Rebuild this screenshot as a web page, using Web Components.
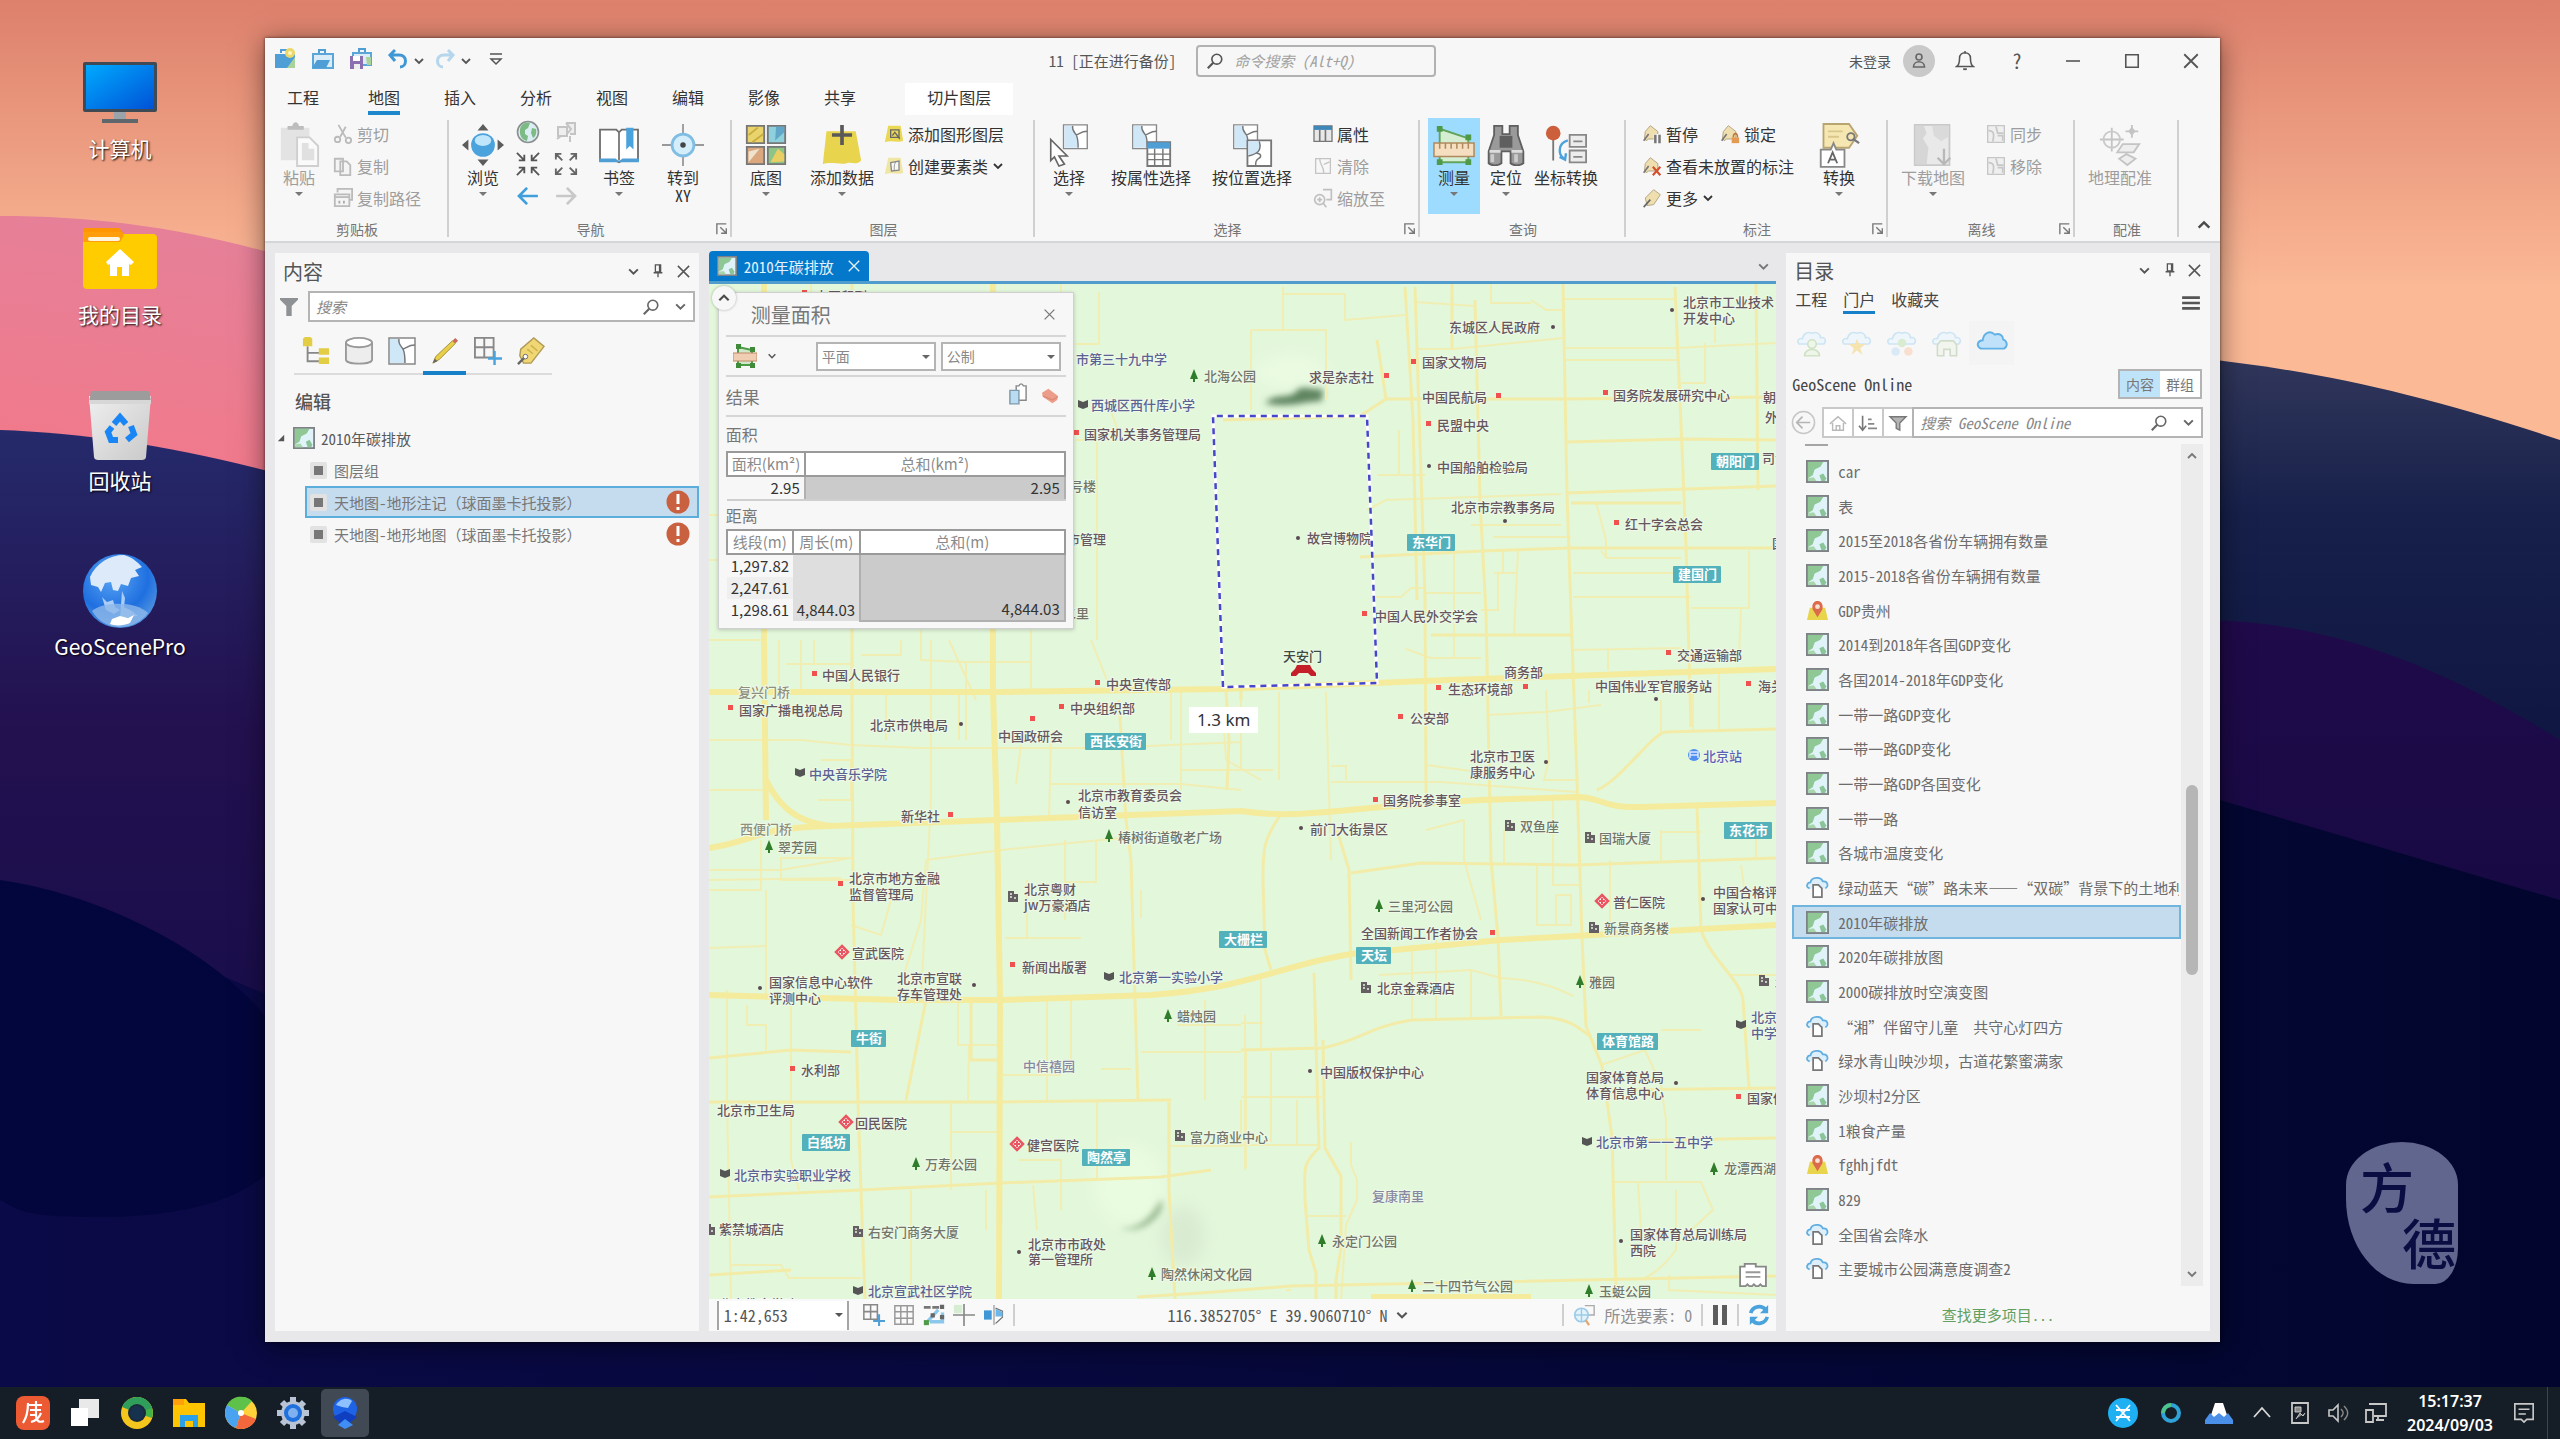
<!DOCTYPE html>
<html lang="zh-CN">
<head>
<meta charset="utf-8">
<title>GeoScenePro</title>
<style>
  html, body {
    height: 100%;
    margin: 0;
  }

  body {
    font-family: "Noto Sans Mono CJK SC", "Noto Sans CJK SC", "Noto Sans", sans-serif;
    font-size: 15px;
    color: #4a4a4a;
    overflow: hidden;
  }
</style>
</head>
<body>
<desktop-shell></desktop-shell>

<script>
// ---------- icons ----------
// name: [viewBox width, viewBox height, markup]

const MAP_SHEET = '<rect x="1" y="1" width="22" height="22" fill="#dff3f8" stroke="#7d8285" stroke-width="2"/><path d="M2 2h16l-3 5-6 3-2 6-5 3z" fill="#8fc795"/><path d="M14 16l4-2 3 5-1 3h-4z" fill="#8cc49a"/><path d="M2 19l6-1 3 4H2z" fill="#a8d6ac"/>';
const TAG = '<path d="M3 17L4 9l6-7 9 7v9H8l-3 2z" fill="#f0dfae" stroke="#a8997a"/><path d="M2 20l6-8" stroke="#777" stroke-width="2"/>';
const CLOUD = '<path d="M3 15c-3-3 0-6 3-5 1-5 5-7 9-5 3-2 8 0 8 4 4-1 6 3 3 6z" fill="#eef6fc" stroke="#cde5f3" stroke-width="1.5"/>';
const SHEET = '<path d="M1 1h26v26H1z" fill="#fff" stroke="#888" stroke-width="1.5"/><path d="M2 2h9c-1 5 2 7 4 10 2 4 2 9 2 14H2z" fill="#cfe7f7"/><path d="M11 2c-1 5 2 7 4 10 2 4 2 9 2 14M15 12c4-1 5-4 12-4" fill="none" stroke="#777" stroke-width="1.5"/>';

const ICONS = {
  chevron: [12, 12, '<path d="M2 4l4 4 4-4" fill="none" stroke="currentColor" stroke-width="1.8"/>'],
  chevronUp: [12, 12, '<path d="M2 8l4-4 4 4" fill="none" stroke="currentColor" stroke-width="1.8"/>'],
  caret: [12, 12, '<path d="M2 4h8l-4 4z" fill="currentColor"/>'],
  close: [16, 16, '<path d="M2 2l12 12M14 2L2 14" stroke="currentColor" stroke-width="1.6"/>'],
  pin: [16, 16, '<path d="M5 1h6v8H5zM3 10h10M8 10v5" fill="none" stroke="currentColor" stroke-width="1.5"/><path d="M9 1h2v8H9z" fill="currentColor"/>'],
  search: [20, 20, '<circle cx="12" cy="8" r="5.5" fill="none" stroke="currentColor" stroke-width="1.8"/><path d="M8 12l-6 6" stroke="currentColor" stroke-width="2.4"/>'],
  filter: [20, 22, '<path d="M0 1h20v2l-7 7v11H7V10L0 3z" fill="#8f9294"/>'],
  filterLine: [22, 20, '<path d="M2 3h18l-7 7v8l-4-2v-6z" fill="#b4b4b4" stroke="#777" stroke-width="1.5"/>'],
  minimize: [18, 18, '<path d="M2 9h14" stroke="currentColor" stroke-width="1.6"/>'],
  maximize: [18, 18, '<path d="M2 2h14v14H2z" fill="none" stroke="currentColor" stroke-width="1.8"/>'],
  bell: [22, 24, '<path d="M2 18c3-2 3-5 3-9 0-8 12-8 12 0 0 4 0 7 3 9zM11 1v3" fill="none" stroke="currentColor" stroke-width="1.7"/><path d="M9 20h4v2H9z" fill="currentColor"/>'],
  avatar: [32, 32, '<circle cx="16" cy="16" r="16" fill="#c9c9c9"/><circle cx="16" cy="12" r="3" fill="none" stroke="#666" stroke-width="1.6"/><path d="M10.500 22c0-7 11-7 11 0z" fill="none" stroke="#666" stroke-width="1.6"/>'],
  menu: [20, 18, '<path d="M0 3h20M0 9h20M0 15h20" stroke="#555" stroke-width="3"/>'],
  launcher: [14, 14, '<path d="M1 13V1h11M5 5l7 7M12 6v6H6" fill="none" stroke="#777" stroke-width="1.6"/>'],

  projectNew: [24, 24, '<path d="M2 7h20v14H2z" fill="#4f9ed6"/><path d="M8 6V3h6v3" fill="none" stroke="#4f9ed6" stroke-width="2"/><path d="M22 10v11h-8z" fill="#a9d39a"/><circle cx="17" cy="6" r="5" fill="#ecd868"/><circle cx="17" cy="6" r="2" fill="#fff6c0"/>'],
  projectOpen: [24, 24, '<path d="M2 7h20v14H2z" fill="#d9ecf7" stroke="#5aa6d8" stroke-width="2"/><path d="M8 6V3h6v3" fill="none" stroke="#4f9ed6" stroke-width="2"/><path d="M1 21l5-8h13l-4 8z" fill="#4f9ed6"/>'],
  projectSave: [24, 24, '<path d="M4 6h18v12H4z" fill="#d9ecf7" stroke="#5aa6d8" stroke-width="2"/><path d="M10 5V2h6v3" fill="none" stroke="#4f9ed6" stroke-width="2"/><path d="M1 9h13v13H1z" fill="#8c6fb0"/><path d="M4 9h7v5H4z" fill="#fff"/><path d="M5 17h6v5H5z" fill="#eee"/><path d="M17 10h5v8h-4z" fill="#a9d39a"/>'],
  undo: [22, 22, '<path d="M8 2L3 7l5 6M3 7h9c9 0 8 12 1 12" fill="none" stroke="#3f97d6" stroke-width="3"/>'],
  redo: [22, 22, '<path d="M14 2l5 5-5 6M19 7h-9c-9 0-8 12-1 12" fill="none" stroke="#b5d6ec" stroke-width="3"/>'],
  qatMore: [14, 16, '<path d="M1 3h12M2 8h10l-5 5z" fill="none" stroke="#555" stroke-width="1.5"/>'],

  paste: [44, 48, '<path d="M3 6h30v34H3z" fill="#e3e3e3"/><path d="M10 8V4h5c1-5 6-5 7 0h5v4z" fill="#bdbdbd"/><path d="M20 16h13l9 9v21H20z" fill="#fafafa" stroke="#cfcfcf" stroke-width="2"/><path d="M25 22h7v6h6v12H25z" fill="#e0e0e0"/>'],
  cut: [22, 22, '<path d="M6 1l8 14M14 3L8 14" stroke="#bbb" stroke-width="2"/><circle cx="5" cy="17" r="3" fill="none" stroke="#bbb" stroke-width="2"/><circle cx="17" cy="18" r="3" fill="none" stroke="#bbb" stroke-width="2"/>'],
  copy: [22, 22, '<path d="M2 3h9v14H2zM8 6h7l4 4v11H8z" fill="#f4f4f4" stroke="#bbb" stroke-width="2"/>'],
  copyPath: [22, 22, '<path d="M5 5V1h16v12h-3M2 7h16v13H2z" fill="#f4f4f4" stroke="#bbb" stroke-width="2"/><path d="M2 10h16" stroke="#bbb" stroke-width="2"/><path d="M7 14v3M12 14v3" stroke="#aaa" stroke-width="2"/>'],
  explore: [46, 46, '<path d="M23 0l6 7H17zM23 46l6-7H17zM0 23l7-6v12zM46 23l-7-6v12z" fill="#5c5c5c"/><circle cx="23" cy="23" r="13" fill="#4aa3dd"/><ellipse cx="23" cy="18" rx="9" ry="6" fill="#bfe6fa"/>'],
  globe: [24, 24, '<circle cx="12" cy="12" r="10.500" fill="#dceef3" stroke="#8a8f8f" stroke-width="1.6"/><path d="M5 6c3-4 7-4 9-3l-2 5-3 2v4l3 2-1 5C5 20 2 13 5 6zM16 8l4 1c1 5-1 8-3 9l-2-5z" fill="#7dbb85"/>'],
  zoomSel: [24, 24, '<path d="M4 7h9v9H4zM12 3h9v11h-5" fill="#eee" stroke="#c4c4c4" stroke-width="2"/><path d="M12 3l5 6-4 5M16 16v6M3 19l4-3" fill="none" stroke="#c4c4c4" stroke-width="2"/>'],
  zoomIn: [26, 26, '<path d="M1 1l7 7M25 1l-7 7M1 25l7-7M25 25l-7-7M3 9h6V3M23 9h-6V3M3 17h6v6M23 17h-6v6" fill="none" stroke="#555" stroke-width="2"/>'],
  zoomOut: [26, 26, '<path d="M3 3l6 6M23 3l-6 6M3 23l6-6M23 23l-6-6M2 8V2h6M24 8V2h-6M2 18v6h6M24 18v6h-6" fill="none" stroke="#666" stroke-width="2"/>'],
  back: [24, 20, '<path d="M11 1L2 10l9 9M2 10h21" fill="none" stroke="#3f9fdc" stroke-width="3"/>'],
  forward: [24, 20, '<path d="M13 1l9 9-9 9M22 10H1" fill="none" stroke="#c8c8c8" stroke-width="3"/>'],
  bookmark: [46, 42, '<path d="M2 4h18l3 3 3-3h18v34H27l-4 2-4-2H2z" fill="#fff" stroke="#6d6d6d" stroke-width="2"/><path d="M1 36h18l4 3 4-3h18v4H1z" fill="#4f9ed6"/><path d="M23 6v32" stroke="#777" stroke-width="2"/><path d="M31 2h8v24l-4-4-4 4z" fill="#4aa3dd"/>'],
  gotoXY: [46, 46, '<path d="M23 0v46M0 23h46" stroke="#999" stroke-width="2"/><circle cx="23" cy="23" r="12" fill="#d3edfb" stroke="#7fbde2" stroke-width="3"/><circle cx="23" cy="23" r="3" fill="#444"/>'],
  basemap: [46, 46, '<g stroke="#777" stroke-width="2"><path d="M2 2h19v19H2z" fill="#e9d36c"/><path d="M25 2h19v19H25z" fill="#8fd0dd"/><path d="M2 25h19v19H2z" fill="#dba77e"/><path d="M25 25h19v19H25z" fill="#8fc487"/></g><path d="M4 12l10-8M8 20l12-9" stroke="#c9ad3e" stroke-width="2"/><path d="M34 3h9v6l-10 9z" fill="#5fa6c9"/><path d="M4 42V30l12-3z" fill="#eee3cf"/><path d="M28 42l8-15 7 6v8z" fill="#e9ce64"/>'],
  addData: [46, 46, '<path d="M6 8h32l6 32c-6 6-10 1-16 3S10 41 2 44z" fill="#e8d44d"/><path d="M23 1v22M12 12h22" stroke="#595959" stroke-width="4"/>'],
  graphicLayer: [24, 24, '<path d="M5 2h15l3 18c-6 3-14-1-22 2z" fill="#ead855"/><path d="M8 7h10v9H8z" fill="none" stroke="#666" stroke-width="1.6"/><path d="M10 14l3-4 6 8" fill="none" stroke="#666" stroke-width="1.6"/>'],
  featureClass: [24, 24, '<path d="M5 2h15l3 18c-6 3-14-1-22 2z" fill="#efe6a4"/><path d="M8 8l10-2v11l-9 1z" fill="#f7f7f7" stroke="#888" stroke-width="1.6"/><path d="M14 7c-3 5-1 8-2 11" fill="none" stroke="#888"/>'],
  select: [46, 48, `<g transform="translate(16 1)">${SHEET}</g><path d="M3 18l18 18h-9l6 9-6 2-5-10-4 4z" fill="#fff" stroke="#666" stroke-width="1.8"/>`],
  selectAttr: [46, 48, `<g transform="translate(2 1)">${SHEET}</g><path d="M19 21h25v26H19z" fill="#fff" stroke="#777" stroke-width="2"/><path d="M19 21h25v7H19z" fill="#4f9ed6"/><path d="M19 34h25M19 40h25M27 28v19M36 28v19" stroke="#777" stroke-width="1.6"/>`],
  selectLoc: [46, 48, `<g transform="translate(2 1)">${SHEET}</g><path d="M18 19h26v28H18z" fill="#fff" stroke="#777" stroke-width="2"/><path d="M19 20h12c3 12-2 14-12 16z" fill="#cfe7f7"/><path d="M31 20c3 10-2 14-12 16M28 33c5 0 6 4 2 6-3 2-3 4-3 8" fill="none" stroke="#777" stroke-width="1.6"/>`],
  attributes: [24, 22, '<path d="M1 1h22v19H1z" fill="#e8e8e8" stroke="#777" stroke-width="1.6"/><path d="M1 1h22v5H1z" fill="#3f87b8"/><path d="M8 6v14M15 6v14" stroke="#777" stroke-width="2"/>'],
  clearSel: [24, 22, '<path d="M3 2h18v18H3z" fill="none" stroke="#c4c4c4" stroke-width="1.6"/><path d="M8 2c0 8 5 8 5 18M13 9l7-3" fill="none" stroke="#c4c4c4" stroke-width="1.6"/>'],
  zoomTo: [24, 24, '<circle cx="8" cy="14" r="6" fill="none" stroke="#c0c0c0" stroke-width="2"/><path d="M12 2h10v12h-6M12 18l4 5M5 14h6M8 11v6" fill="none" stroke="#c0c0c0" stroke-width="2"/>'],
  measure: [44, 46, '<path d="M7 6l30 10v25H7z" fill="#d5edd0" stroke="#63a45c" stroke-width="2"/><path d="M1 21h42v14H1z" fill="#f5dfc0" stroke="#b08a5e" stroke-width="1.6"/><path d="M7 21v6M13 21v6M19 21v6M25 21v6M31 21v6M37 21v6" stroke="#b08a5e" stroke-width="1.6"/><path d="M4 3h6v6H4zM34 12h6v6h-6zM4 38h6v6H4zM34 38h6v6h-6z" fill="#4e9a48"/>'],
  locate: [46, 46, '<path d="M10 2h9v9h8V2h9v10l6 18v13c-4 3-11 3-14 0V30H18v13c-4 3-11 3-14 0V30l6-18z" fill="#9a9a9a" stroke="#5f5f5f" stroke-width="2"/><path d="M16 13h14v13H16z" fill="#5f5f5f"/><path d="M5 30h12M29 30h12" stroke="#ddd" stroke-width="3"/><path d="M8 33v9M34 33v9" stroke="#ccc" stroke-width="4"/>'],
  coords: [46, 46, '<path d="M9 12v28" stroke="#777" stroke-width="2"/><circle cx="9" cy="10" r="8" fill="#cc5f3c"/><path d="M25 18c-11 3-11 16-4 20M16 36l6 3 1-7" fill="none" stroke="#4aa3dd" stroke-width="2.6"/><path d="M27 12h18v13H27zM27 29h18v13H27z" fill="#ececec" stroke="#888" stroke-width="2"/><path d="M31 19h10M31 36h10" stroke="#888" stroke-width="2"/>'],
  labelPause: [24, 24, `${TAG}<path d="M14 12h9v11h-9z" fill="#f7f7f7"/><path d="M16 13v10M21 13v10" stroke="#777" stroke-width="3"/>`],
  labelLock: [24, 24, `${TAG}<path d="M14 16h9v7h-9z" fill="#e59a52"/><path d="M16 16c0-6 5-6 5 0" fill="none" stroke="#b9783c" stroke-width="1.8"/>`],
  labelX: [24, 24, `${TAG}<path d="M13 13l9 10M22 13l-9 10" stroke="#d4502f" stroke-width="2.600"/>`],
  labelMore: [24, 24, '<path d="M4 12L14 2l8 6-8 12-8 1z" fill="#f0dfae" stroke="#a8997a"/><path d="M2 23l8-9" stroke="#666" stroke-width="2"/>'],
  convert: [46, 50, '<path d="M6 2h28l9 13-9 13H6z" fill="#f6e7b2" stroke="#b9a571" stroke-width="2"/><path d="M11 10h16M11 16h12" stroke="#d9c68c" stroke-width="2"/><circle cx="36" cy="16" r="4" fill="none" stroke="#777" stroke-width="2"/><path d="M38 18l7 5" stroke="#777" stroke-width="2.500"/><path d="M3 30h11l3-7 3 7h9v19H3z" fill="#fff" stroke="#888" stroke-width="2"/><path d="M11 45l5-12 5 12M13 41h6" fill="none" stroke="#666" stroke-width="2"/>'],
  download: [46, 48, '<path d="M3 2h38v44H3z" fill="#e9e9e9" stroke="#c9c9c9" stroke-width="2"/><path d="M4 3h9l3 8-4 6 6 10-2 18H4z" fill="#d6d6d6"/><path d="M22 3h18v12l-8 5-8-6z" fill="#dadada"/><path d="M35 28v16M28 38l7 7 7-7" fill="none" stroke="#b8b8b8" stroke-width="2.500"/>'],
  sync: [24, 24, '<path d="M2 2h20v20H2z" fill="#efefef" stroke="#c6c6c6" stroke-width="1.6"/><path d="M3 8c7 0 7 5 5 13M12 3l2 8h7M14 14h6v6" fill="none" stroke="#c6c6c6" stroke-width="2"/>'],
  georef: [46, 46, '<path d="M14 4v26M1 17h26M36 1v14M29 8h14" stroke="#c4c4c4" stroke-width="2"/><circle cx="14" cy="17" r="9" fill="none" stroke="#c9c9c9" stroke-width="2"/><path d="M36 3l4 5-4 5-4-5z" fill="#c4c4c4"/><path d="M26 22h18l-6 9H20zM22 38l8-5 10 5-9 7z" fill="#eee" stroke="#c4c4c4" stroke-width="2"/>'],

  byOrder: [30, 30, '<path d="M6 10v16h14M6 17h14" fill="none" stroke="#888" stroke-width="2"/><path d="M1 2l2-2h6l2 2v8H1zM18 12h11v7H18zM18 22h11v7H18z" fill="#e3cd45"/>'],
  bySource: [30, 30, '<path d="M1 6v18c0 6 28 6 28 0V6" fill="#ededed" stroke="#999" stroke-width="2"/><ellipse cx="15" cy="6" rx="14" ry="5" fill="#fff" stroke="#999" stroke-width="2"/>'],
  bySelection: [28, 28, SHEET],
  byEditing: [30, 30, '<path d="M2 28l3-7L23 4l3 3L9 24z" fill="#e8cf4a" stroke="#a58e38"/><path d="M23 4l3-3 3 3-3 3z" fill="#c96a5c"/><path d="M2 28l2-5 3 3z" fill="#666"/>'],
  bySnapping: [30, 30, '<path d="M1 1h20v21H1zM11 1v21M1 11h20" fill="none" stroke="#888" stroke-width="2"/><path d="M22 15v15M15 23h15" stroke="#4aa3dd" stroke-width="2.600"/>'],
  byLabeling: [30, 30, '<path d="M3 20L4 13 18 1l11 9-14 18H7z" fill="#f0d773" stroke="#b09a55" stroke-width="1.5"/><path d="M15 9l7 6M11 13l6 5" stroke="#cbb24f" stroke-width="1.6"/><path d="M1 29l8-8" stroke="#666" stroke-width="2.500"/><circle cx="9" cy="21" r="2.500" fill="#fff" stroke="#666"/>'],
  mapSheet: [24, 24, MAP_SHEET],
  expander: [10, 10, '<path d="M9 1v8H1z" fill="#555"/>'],
  error: [24, 24, '<circle cx="12" cy="12" r="11.500" fill="#c9603f"/><path d="M12 4v10M12 17v3" stroke="#fff" stroke-width="3"/>'],
  webLayer: [24, 24, '<path d="M4 9h16l3 13H1z" fill="#e8d44d"/><path d="M12 19l-5-8c-3-12 13-12 10 0z" fill="#dc6a4c"/><circle cx="12" cy="8" r="2.500" fill="#f7e3d4"/>'],
  cloudDoc: [26, 24, '<path d="M4 13c-5-1-3-7 1-7 1-6 12-7 14-1 6-1 7 6 3 8" fill="#dceffa" stroke="#62aee0" stroke-width="2"/><path d="M8 9h6l4 4v10H8z" fill="#fff" stroke="#777" stroke-width="2"/>'],

  cloudUser: [30, 28, `${CLOUD}<circle cx="15" cy="15" r="4" fill="#eef6e9" stroke="#d0e2c5" stroke-width="1.5"/><path d="M8 26c0-8 14-8 14 0z" fill="#eef6e9" stroke="#d0e2c5" stroke-width="1.5"/>`],
  cloudStar: [30, 28, `${CLOUD}<path d="M15 10l2 5h6l-5 4 2 6-5-4-5 4 2-6-5-4h6z" fill="#f5e3b0"/>`],
  cloudGroup: [30, 28, `${CLOUD}<circle cx="15" cy="14" r="4" fill="#d9ecd0"/><circle cx="9" cy="22" r="4" fill="#d9e9f6"/><circle cx="21" cy="22" r="4" fill="#f9dfd0"/>`],
  cloudOrg: [30, 28, `${CLOUD}<path d="M6 26V16l3-4h12l3 4v10h-6v-6h-6v6z" fill="#f1f5ee" stroke="#d0dcc9" stroke-width="1.5"/>`],
  cloudSolid: [34, 28, '<path d="M5 20c-6-3-3-9 2-9 1-8 8-11 13-6 5-2 9 1 9 5 5 2 5 8 1 10z" fill="#bfe2fa" stroke="#61b0e6" stroke-width="2"/>'],
  circleBack: [26, 26, '<circle cx="13" cy="13" r="11.500" fill="none" stroke="#c6c6c6" stroke-width="1.600"/><path d="M12 7l-6 6 6 6M6 13h14" fill="none" stroke="#b5b5b5" stroke-width="1.8"/>'],
  home: [20, 20, '<path d="M1 11l9-8 9 8M4 10v8h12v-8M8 18v-5h4v5" fill="none" stroke="#b9b9b9" stroke-width="1.600"/>'],
  sort: [22, 20, '<path d="M5 2v15M1 13l4 5 4-5" fill="none" stroke="#777" stroke-width="1.8"/><path d="M11 6h4M11 11h7M11 16h10" stroke="#888" stroke-width="1.8"/>'],

  measureSmall: [24, 26, '<path d="M5 4l14 3v15H5z" fill="#cfe8c9" stroke="#4d9a47" stroke-width="2"/><path d="M0 10h24v8H0z" fill="#f1cdb4" stroke="#c08a66"/><path d="M3 1h5v5H3zM17 4h5v5h-5zM3 20h5v5H3zM17 20h5v5h-5z" fill="#3f8b3a"/>'],
  copySmall: [20, 24, '<path d="M8 3h3c1-3 4-3 5 0h3v16H8z" fill="#fff" stroke="#888" stroke-width="1.6"/><path d="M1 8h10v15H1z" fill="#b9dcf2" stroke="#7f9aab" stroke-width="1.6"/>'],
  eraser: [22, 20, '<path d="M1 6l8-5 12 9-1 5-6 4L2 11z" fill="#ec9d89"/><path d="M2 10l12 5 7-4" fill="none" stroke="#d07a66"/>'],

  grid: [24, 24, '<path d="M2 2h20v20H2zM8.500 2v20M15.500 2v20M2 8.500h20M2 15.500h20" fill="none" stroke="#999" stroke-width="1.600"/>'],
  snapAdd: [26, 26, '<path d="M1 1h16v17H1zM9 1v17M1 9h16" fill="none" stroke="#888" stroke-width="1.800"/><path d="M19 12v14M12 20h14" stroke="#4f9ed6" stroke-width="2.400"/>'],
  dynamic: [26, 26, '<path d="M6 20L18 7M8 21h15V10" stroke="#8cc8ec" stroke-width="4" fill="none"/><path d="M1 4h8M11 4h8" stroke="#777" stroke-width="3"/><path d="M20 1h5v5h-5zM9 11h5v5H9zM20 13h5v5h-5z" fill="#666"/><path d="M1 19h6v6H1z" fill="#4e9a48"/>'],
  crosshair: [24, 24, '<path d="M1 1h9v9H1z" fill="#d5edd0"/><path d="M12 0v24M0 12h24" stroke="#888" stroke-width="1.800"/>'],
  compare: [28, 26, '<path d="M1 7h10v12H1z" fill="#3f97d6"/><path d="M14 0v26" stroke="#999" stroke-width="1.6"/><path d="M16 4l9 4v8l-9 8" fill="#fff" stroke="#777" stroke-width="1.6"/><path d="M16 5l9 4v6h-9z" fill="#6db8e8"/>'],
  selCount: [26, 26, '<path d="M14 2h11v11h-6" fill="none" stroke="#aaa" stroke-width="1.600"/><circle cx="10" cy="13" r="8" fill="#e3f2fb" stroke="#9ccbe8" stroke-width="2"/><path d="M10 5v16M2 13h16" stroke="#9ccbe8" stroke-width="1.600"/><path d="M15 19l4 6" stroke="#e6a46f" stroke-width="2.600"/>'],
  pause: [16, 20, '<path d="M1 0h5v20H1zM10 0h5v20h-5z" fill="#5c5c5c"/>'],
  refresh: [24, 24, '<path d="M3 10c2-8 12-9 16-4M21 14c-2 8-12 9-16 4" fill="none" stroke="#4aa3dd" stroke-width="4"/><path d="M22 1v9h-9zM2 23v-9h9z" fill="#4aa3dd"/>'],
  notes: [32, 26, '<path d="M2 4h5V1h12v3h11v21h-4l-2-2-2 2h-3l-2-2-2 2h-3l-2-2-2 2H2z" fill="#fff" stroke="#888" stroke-width="2"/><path d="M8 10h16M8 15h16" stroke="#999" stroke-width="2"/>'],

  computer: [76, 64, '<defs><linearGradient id="s" x2="1" y2="1"><stop stop-color="#00aaff"/><stop offset="1" stop-color="#0052d6"/></linearGradient></defs><path d="M32 50h12v8H32z" fill="#9aa3aa"/><path d="M20 58h36v4H20z" fill="#5f666c"/><rect x="1" y="1" width="74" height="50" rx="2" fill="#3f4a55"/><path d="M4 4h68v44H4z" fill="url(#s)"/>'],
  homeFolder: [76, 62, '<path d="M1 3c0-2 1-3 3-3h33l6 7v14H1z" fill="#ff9500"/><rect x="1" y="6" width="74" height="55" rx="4" fill="#ffcc00"/><path d="M1 14V4h38l3 3-4 7z" fill="#ff9d0a"/><rect x="6" y="9" width="32" height="4" rx="2" fill="#fff6df"/><path d="M24 34l14-13 14 13-3 3-2-1v12h-7v-9h-5v9h-7V36l-2 1z" fill="#fff"/>'],
  trash: [66, 70, '<defs><linearGradient id="t" x2="1" y2="1"><stop stop-color="#efefef"/><stop offset="1" stop-color="#c9c9c9"/></linearGradient></defs><path d="M2 6h62l-5 61c0 2-2 3-4 3H11c-2 0-4-1-4-3z" fill="url(#t)"/><path d="M4 1h58l2 12H2z" fill="#9c9c9c"/><path d="M2 10h62v4H2z" fill="#d7d7d7"/><g fill="none" stroke="#1a86f5" stroke-width="6"><path d="M27 34l6-7 6 7"/><path d="M44 36l3 8-7 6"/><path d="M31 50h-7l-3-8 4-5"/></g>'],
  earth: [76, 76, '<defs><radialGradient id="e" cx=".4" cy=".3" r=".8"><stop stop-color="#5aa6f5"/><stop offset=".6" stop-color="#1f6fe0"/><stop offset="1" stop-color="#5f9fe0"/></radialGradient></defs><circle cx="38" cy="38" r="37" fill="url(#e)"/><path d="M8 24C14 10 28 2 42 2c10 3 14 8 18 12l-7 3 4 6-8 2-3 8-7-2-3 7-5-1-2-8-6 1-4 9-3-5-7-2z" fill="#dceafa"/><path d="M20 44l5 5 6-2 2 7 5 3-6 4-8-4zM40 38l3 7-1 9 8 4 6 5-18 2z" fill="#a9cdf6"/><path d="M10 58c12-10 44-10 56 2-6 8-16 14-28 14S16 68 10 58z" fill="#8fb9ea" opacity=".8"/><path d="M30 66l8-3 8 2 6-3-4 8c-6 3-16 3-20 1z" fill="#fff"/>'],

  tStart: [34, 34, '<rect width="34" height="34" rx="8" fill="#ec5a33"/><path d="M12 7c0 8-1 14-5 20M12 9h14M14 14h11M14 19h6M20 5v14c0 6 3 8 8 6M25 17c-2 5-6 8-10 9" fill="none" stroke="#fff" stroke-width="2.200"/>'],
  tViews: [30, 28, '<path d="M9 0h20v19H9z" fill="#e9e9e9"/><path d="M1 9h17v18H1z" fill="#fff"/>'],
  tBrowser: [34, 34, '<circle cx="17" cy="17" r="16" fill="#f4c51c"/><path d="M17 1a16 16 0 0 1 15 21L17 17z" fill="#3fb24b"/><path d="M2 11A16 16 0 0 1 32 12l-15 5z" fill="#2f9e5b"/><circle cx="17" cy="17" r="9" fill="#1a2a3a"/><circle cx="17" cy="17" r="7" fill="#17324f"/>'],
  tFiles: [34, 30, '<path d="M1 1h13l3 4h16v24H1z" fill="#ffc400"/><path d="M1 1h11v6H1z" fill="#ff9f0a"/><path d="M8 17h18v12h-5v-6h-8v6H8z" fill="#2aa0e8"/>'],
  tPhotos: [34, 34, '<circle cx="17" cy="17" r="16" fill="#ffd23c"/><path d="M17 17L3 9A16 16 0 0 1 28 5z" fill="#5ec24a"/><path d="M17 17l-5 15A16 16 0 0 1 3 9z" fill="#4aa3f0"/><path d="M17 17l15 6A16 16 0 0 1 12 32z" fill="#f2673c"/><circle cx="17" cy="17" r="3" fill="#fff"/>'],
  tSettings: [34, 34, '<path d="M17 1v32M1 17h32M6 6l22 22M28 6L6 28" stroke="#b8c4d6" stroke-width="6"/><circle cx="17" cy="17" r="12" fill="#b8c4d6"/><circle cx="17" cy="17" r="9" fill="#1f6fdd"/><circle cx="17" cy="17" r="5" fill="#7fb0f0"/>'],
  tGeo: [34, 34, '<circle cx="17" cy="13" r="12" fill="#1e63e6"/><path d="M8 9c4-7 12-8 16-4l-4 7-6-1z" fill="#8fc0ff"/><path d="M5 21l12-6 12 6-12 10z" fill="#0f3fc0"/><path d="M10 29l7-6 8 6-8 4z" fill="#3f8df5"/>'],
  tRound: [30, 30, '<circle cx="15" cy="15" r="15" fill="#1fb0f4"/><path d="M8 7l14 16M22 7L8 23M8 12h14M8 19h14" stroke="#fff" stroke-width="1.8"/>'],
  tRing: [24, 24, '<circle cx="12" cy="12" r="8" fill="none" stroke="#2fa3d8" stroke-width="4"/><path d="M4 12a8 8 0 0 1 8-8" fill="none" stroke="#4fc48a" stroke-width="4"/>'],
  tTriangle: [28, 26, '<path d="M5 18L10 3h8l5 15z" fill="#fff"/><path d="M0 20l5-7 4 4 5-4 5 4 4-4 5 7v4H0z" fill="#4a90e8"/>'],
  tUp: [20, 20, '<path d="M2 14l8-9 8 9" fill="none" stroke="#d8d8d8" stroke-width="1.8"/>'],
  tClip: [20, 24, '<path d="M2 2h16v20H2z" fill="none" stroke="#c8c8c8" stroke-width="1.8"/><path d="M5 6h6v5H5zM6 18l4-6 3 3 2-3" fill="#888" stroke="#c8c8c8"/>'],
  tVolume: [22, 20, '<path d="M2 7h4l5-5v16l-5-5H2z" fill="none" stroke="#c8c8c8" stroke-width="1.6"/><path d="M14 6c3 3 3 5 0 8M17 3c5 5 5 9 0 14" fill="none" stroke="#888" stroke-width="1.6"/>'],
  tNetwork: [24, 22, '<path d="M5 2h17v12H10M12 18h8M14 14v4M2 8h7v12H2z" fill="none" stroke="#c8c8c8" stroke-width="1.8"/>'],
  tNotice: [24, 24, '<path d="M2 2h20v17h-7l-3 3-3-3H2z" fill="none" stroke="#c8c8c8" stroke-width="1.8"/><path d="M6 8h12M6 13h8" stroke="#c8c8c8" stroke-width="1.600"/>'],
};

class UiElement extends HTMLElement {
  constructor() {
    super();
    const template = document.createElement('template');
    template.innerHTML = this.constructor.render(this);
    this.attachShadow({ mode: 'open' }).appendChild(template.content.cloneNode(true));
  }
}

const BUTTON_RESET = `
  button {
    font: inherit;
    color: inherit;
    background: none;
    border: 0;
    padding: 0;
    margin: 0;
    cursor: pointer;
  }
`;

class UiIcon extends UiElement {
  static render(el) {
    const [w, h, markup] = ICONS[el.getAttribute('name')];
    const size = Number(el.getAttribute('size') || w);
    return `
      <style>
        :host { display: inline-flex; flex: none; }
        svg { display: block; }
      </style>
      <svg width="${size}" height="${Math.round(size * h / w)}" viewBox="0 0 ${w} ${h}" aria-hidden="true">${markup}</svg>
    `;
  }
}
customElements.define('ui-icon', UiIcon);

// ---------- desktop ----------

class DesktopShortcut extends UiElement {
  static render(el) {
    return `
      <style>
        ${BUTTON_RESET}
        :host { display: block; height: 166px; }
        button { display: flex; flex-direction: column; align-items: center; width: 100%; }
        .art { display: flex; align-items: center; justify-content: center; height: 78px; }
        .name {
          font-family: "Noto Sans CJK SC", "Noto Sans", sans-serif;
          font-size: 21px;
          line-height: 32px;
          color: #fff;
          text-shadow: 1px 1px 2px #000;
        }
      </style>
      <button type="button">
        <span class="art"><ui-icon name="${el.getAttribute('icon')}"></ui-icon></span>
        <span class="name"><slot></slot></span>
      </button>
    `;
  }
}
customElements.define('desktop-shortcut', DesktopShortcut);

class DesktopWallpaper extends UiElement {
  static render() {
    return `
      <style>
        :host { display: block; position: absolute; inset: 0; }
        svg { display: block; width: 100%; height: 100%; }
      </style>
      <svg viewBox="0 0 2560 1439" preserveAspectRatio="none" aria-hidden="true">
        <defs>
          <linearGradient id="sky" x2="0" y2="1"><stop stop-color="#dd806c"/><stop offset=".2" stop-color="#fbb996"/></linearGradient>
          <linearGradient id="pink" x1=".6" x2=".3" y2="1"><stop stop-color="#e2829c"/><stop offset="1" stop-color="#fb7480"/></linearGradient>
          <linearGradient id="navy" x2="0" y2="1"><stop stop-color="#252a6b"/><stop offset=".3" stop-color="#23104f"/><stop offset="1" stop-color="#0a0a45"/></linearGradient>
          <linearGradient id="slate" x2="0" y2="1"><stop stop-color="#33385c"/><stop offset=".3" stop-color="#16204a"/><stop offset="1" stop-color="#0a0f3c"/></linearGradient>
          <linearGradient id="deep" x2="1" y2="0"><stop stop-color="#0b0a48"/><stop offset="1" stop-color="#02062e"/></linearGradient>
          <linearGradient id="purple" x2="0" y2="1"><stop stop-color="#200a4a"/><stop offset="1" stop-color="#070838"/></linearGradient>
        </defs>
        <path d="M0 0h2560v1439H0z" fill="url(#sky)"/>
        <path d="M0 216C160 216 300 250 480 330L900 700H0z" fill="url(#pink)"/>
        <path d="M2100 350C2260 360 2380 380 2560 440V900H2100z" fill="url(#slate)"/>
        <path d="M0 430C120 434 260 460 420 520L900 1439H0z" fill="url(#navy)"/>
        <path d="M2100 630C2260 600 2400 640 2560 740V1439H2100z" fill="url(#purple)"/>
        <path d="M0 1439V900C400 1000 800 1330 1200 1330S1900 780 2220 800L2560 900V1439z" fill="url(#deep)"/>
        <path d="M0 880C140 900 300 1000 300 1100S180 1217 100 1217 20 1210 0 1200z" fill="#03063c"/>
      </svg>
    `;
  }
}
customElements.define('desktop-wallpaper', DesktopWallpaper);

class DesktopSeal extends UiElement {
  static render() {
    return `
      <style>
        :host {
          display: block;
          width: 112px;
          height: 142px;
          box-sizing: border-box;
          padding: 16px 2px 0 14px;
          background: #61668f;
          border-radius: 50% 50% 20% 60% / 30% 30% 25% 60%;
          font-family: "Noto Sans CJK SC", sans-serif;
          font-size: 54px;
          font-weight: 500;
          line-height: 56px;
          color: #0a0d42;
        }
        span { display: block; }
        span + span { text-align: right; }
      </style>
      <span>方</span><span>德</span>
    `;
  }
}
customElements.define('desktop-seal', DesktopSeal);

class TaskBar extends UiElement {
  static render() {
    const apps = ['tStart', 'tViews', 'tBrowser', 'tFiles', 'tPhotos', 'tSettings', 'tGeo'];
    const tray = ['tRound', 'tRing', 'tTriangle', 'tUp', 'tClip', 'tVolume', 'tNetwork'];
    return `
      <style>
        ${BUTTON_RESET}
        :host {
          display: flex;
          justify-content: space-between;
          height: 52px;
          background: #151d26;
          color: #fff;
          position: relative;
        }
        .apps, .tray { display: flex; align-items: center; }
        .apps { padding-left: 9px; gap: 4px; }
        .apps button { width: 48px; height: 48px; display: grid; place-items: center; border-radius: 5px; }
        .apps .active { background: #414a54; }
        .tray button { width: 38px; height: 48px; display: grid; place-items: center; }
        .tray button:nth-child(-n+3) { width: 48px; }
        time {
          font-family: "Noto Sans", sans-serif;
          font-size: 16px;
          font-weight: 600;
          line-height: 24px;
          width: 110px;
          text-align: center;
        }
        .peek { border-left: 1px solid #3c444c; height: 100%; width: 12px; margin-left: 4px; }
      </style>
      <div class="apps">${apps.map((a) => `<button type="button" class="${a === 'tGeo' ? 'active' : ''}"><ui-icon name="${a}"></ui-icon></button>`).join('')}</div>
      <div class="tray">
        ${tray.map((a) => `<button type="button"><ui-icon name="${a}"></ui-icon></button>`).join('')}
        <time>15:17:37<br>2024/09/03</time>
        <button type="button"><ui-icon name="tNotice" size="22"></ui-icon></button>
        <span class="peek"></span>
      </div>
    `;
  }
}
customElements.define('task-bar', TaskBar);

// ---------- title bar and ribbon ----------

class TitleBar extends UiElement {
  static render() {
    return `
      <style>
        ${BUTTON_RESET}
        :host {
          display: grid;
          grid-template-columns: 1fr auto 1fr;
          align-items: center;
          height: 45px;
          color: #555;
        }
        .quick { display: flex; align-items: center; gap: 14px; padding-left: 8px; }
        .quick .tight { margin: 0 -5px 0 -10px; }
        .quick .tight + .more { margin-left: 8px; }
        .center { display: flex; align-items: center; gap: 20px; }
        .search {
          display: flex;
          align-items: center;
          gap: 8px;
          width: 240px;
          height: 32px;
          box-sizing: border-box;
          padding: 0 8px;
          border: 2px solid #b2b2b2;
          border-radius: 4px;
        }
        input { font: italic 15px "Noto Sans Mono CJK SC", "Noto Sans CJK SC", sans-serif; border: 0; outline: 0; background: none; min-width: 0; flex: 1; }
        input::placeholder { color: #a2a2a2; opacity: 1; }
        .right { display: flex; align-items: center; justify-content: flex-end; }
        .right button { width: 59px; height: 40px; display: grid; place-items: center; }
        .right .narrow { width: 52px; }
        .user { display: flex; align-items: center; gap: 12px; font-size: 14px; margin-right: 4px; }
        .help { font-size: 20px; }
      </style>
      <div class="quick">
        <button type="button"><ui-icon name="projectNew"></ui-icon></button>
        <button type="button"><ui-icon name="projectOpen"></ui-icon></button>
        <button type="button"><ui-icon name="projectSave"></ui-icon></button>
        <button type="button"><ui-icon name="undo"></ui-icon></button>
        <button type="button" class="tight"><ui-icon name="chevron"></ui-icon></button>
        <button type="button"><ui-icon name="redo"></ui-icon></button>
        <button type="button" class="tight"><ui-icon name="chevron"></ui-icon></button>
        <button type="button" class="more"><ui-icon name="qatMore"></ui-icon></button>
      </div>
      <div class="center">
        <span>11 [正在进行备份]</span>
        <label class="search"><ui-icon name="search" size="18"></ui-icon><input type="text" placeholder="命令搜索 (Alt+Q)" aria-label="命令搜索"></label>
      </div>
      <div class="right">
        <span class="user">未登录<ui-icon name="avatar"></ui-icon></span>
        <button type="button" class="narrow"><ui-icon name="bell" size="20"></ui-icon></button>
        <button type="button" class="narrow help">?</button>
        <button type="button"><ui-icon name="minimize"></ui-icon></button>
        <button type="button"><ui-icon name="maximize" size="16"></ui-icon></button>
        <button type="button"><ui-icon name="close" size="18"></ui-icon></button>
      </div>
    `;
  }
}
customElements.define('title-bar', TitleBar);

class RibbonTabs extends UiElement {
  static render() {
    const tabs = ['工程', '地图', '插入', '分析', '视图', '编辑', '影像', '共享'];
    return `
      <style>
        ${BUTTON_RESET}
        :host { display: flex; height: 34px; font-size: 16px; font-weight: 500; color: #333; }
        button { padding: 0 22px; height: 32px; }
        span { display: inline-block; line-height: 28px; border-bottom: 4px solid transparent; }
        button:first-of-type { margin-right: 5px; }
        .on span { border-color: #1e88cf; }
        .context { background: #fff; margin-left: 27px; }
      </style>
      ${tabs.map((t) => `<button type="button" class="${t === '地图' ? 'on' : ''}"><span>${t}</span></button>`).join('')}
      <button type="button" class="context"><span>切片图层</span></button>
    `;
  }
}
customElements.define('ribbon-tabs', RibbonTabs);

class RibbonGroup extends UiElement {
  static render(el) {
    return `
      <style>
        ${BUTTON_RESET}
        :host {
          display: flex;
          flex-direction: column;
          min-width: 0;
          box-sizing: border-box;
          position: relative;
        }
        :host::after {
          content: '';
          position: absolute;
          right: 0;
          top: 3px;
          bottom: 4px;
          border-right: 2px solid #d0d0d0;
        }
        .body { display: flex; flex: 1; align-items: flex-start; padding-top: 1px; }
        .foot { display: grid; grid-template-columns: 20px 1fr 20px; height: 24px; align-items: center; text-align: center; font-size: 14px; color: #757575; }
        .foot span { grid-column: 2; }
      </style>
      <div class="body"><slot></slot></div>
      <div class="foot"><span>${el.getAttribute('label')}</span>${el.hasAttribute('launcher') ? '<button type="button"><ui-icon name="launcher" size="12"></ui-icon></button>' : ''}</div>
    `;
  }
}
customElements.define('ribbon-group', RibbonGroup);

class RibbonButton extends UiElement {
  static render(el) {
    return `
      <style>
        ${BUTTON_RESET}
        :host { display: block; color: #333; font-size: 16px; }
        :host([disabled]) { color: #9d9d9d; }
        :host([active]) { background: #9ddcff; }
        button { display: flex; flex-direction: column; align-items: center; width: 100%; height: 96px; padding-top: 4px; white-space: nowrap; }
        .art { display: flex; align-items: center; height: 46px; }
        .text { line-height: 18px; }
        .more { color: #777; display: flex; margin-top: 2px; }
      </style>
      <button type="button">
        <span class="art"><ui-icon name="${el.getAttribute('icon')}" size="42"></ui-icon></span>
        <span class="text"><slot></slot></span>
        ${el.hasAttribute('menu') ? '<span class="more"><ui-icon name="caret" size="12"></ui-icon></span>' : ''}
      </button>
    `;
  }
}
customElements.define('ribbon-button', RibbonButton);

class RibbonItem extends UiElement {
  static render(el) {
    return `
      <style>
        ${BUTTON_RESET}
        :host { display: block; font-size: 16px; color: #333; }
        :host([disabled]) { color: #9d9d9d; }
        button { display: flex; align-items: center; gap: 4px; height: 32px; white-space: nowrap; }
      </style>
      <button type="button">
        <ui-icon name="${el.getAttribute('icon')}" size="20"></ui-icon>
        <slot></slot>
        ${el.hasAttribute('menu') ? '<ui-icon name="chevron" size="12"></ui-icon>' : ''}
      </button>
    `;
  }
}
customElements.define('ribbon-item', RibbonItem);

class AppRibbon extends UiElement {
  static render() {
    return `
      <style>
        ${BUTTON_RESET}
        :host { display: flex; height: 126px; border-bottom: 2px solid #d4d6da; box-sizing: border-box; }
        .stack { display: flex; flex-direction: column; }
        .row { display: flex; gap: 22px; }
        .clip { flex: 184 1 0; }
        .nav { flex: 283 1 0; }
        .layer { flex: 303 1 0; }
        .sel { flex: 385 1 0; }
        .query { flex: 206 1 0; }
        .label { flex: 262 1 0; }
        .offline { flex: 187 1 0; }
        .geo { flex: 104 1 0; }
        .end { flex: 41 1 0; display: flex; align-items: flex-end; justify-content: flex-end; }
        .end button { margin: 0 8px 4px 0; }
        .w52 { width: 52px; }
        .w60 { width: 60px; }
        .w68 { width: 68px; }
        .w84 { width: 84px; }
        .w90 { width: 90px; }
        .w112 { width: 112px; }
        .pad { margin-left: 8px; }
        .arrows { display: grid; grid-template-columns: 38px 38px; grid-auto-rows: 32px; place-items: center; }
      </style>
      <ribbon-group class="clip" label="剪贴板">
        <ribbon-button class="w52 pad" icon="paste" disabled menu>粘贴</ribbon-button>
        <div class="stack pad">
          <ribbon-item icon="cut" disabled>剪切</ribbon-item>
          <ribbon-item icon="copy" disabled>复制</ribbon-item>
          <ribbon-item icon="copyPath" disabled>复制路径</ribbon-item>
        </div>
      </ribbon-group>
      <ribbon-group class="nav" label="导航" launcher>
        <ribbon-button class="w52 pad" icon="explore" menu>浏览</ribbon-button>
        <div class="arrows">
          <button type="button"><ui-icon name="globe"></ui-icon></button>
          <button type="button"><ui-icon name="zoomSel"></ui-icon></button>
          <button type="button"><ui-icon name="zoomIn" size="24"></ui-icon></button>
          <button type="button"><ui-icon name="zoomOut" size="24"></ui-icon></button>
          <button type="button"><ui-icon name="back" size="22"></ui-icon></button>
          <button type="button"><ui-icon name="forward" size="22"></ui-icon></button>
        </div>
        <ribbon-button class="w68" icon="bookmark" menu>书签</ribbon-button>
        <ribbon-button class="w60" icon="gotoXY">转到<br>XY</ribbon-button>
      </ribbon-group>
      <ribbon-group class="layer" label="图层">
        <ribbon-button class="w68" icon="basemap" menu>底图</ribbon-button>
        <ribbon-button class="w84" icon="addData" menu>添加数据</ribbon-button>
        <div class="stack">
          <ribbon-item icon="graphicLayer">添加图形图层</ribbon-item>
          <ribbon-item icon="featureClass" menu>创建要素类</ribbon-item>
        </div>
      </ribbon-group>
      <ribbon-group class="sel" label="选择" launcher>
        <ribbon-button class="w52 pad" icon="select" menu>选择</ribbon-button>
        <ribbon-button class="w112" icon="selectAttr">按属性选择</ribbon-button>
        <ribbon-button class="w90" icon="selectLoc">按位置选择</ribbon-button>
        <div class="stack pad">
          <ribbon-item class="pad" icon="attributes">属性</ribbon-item>
          <ribbon-item class="pad" icon="clearSel" disabled>清除</ribbon-item>
          <ribbon-item class="pad" icon="zoomTo" disabled>缩放至</ribbon-item>
        </div>
      </ribbon-group>
      <ribbon-group class="query" label="查询">
        <ribbon-button class="w52 pad" icon="measure" active menu>测量</ribbon-button>
        <ribbon-button class="w52" icon="locate" menu>定位</ribbon-button>
        <ribbon-button class="w68" icon="coords">坐标转换</ribbon-button>
      </ribbon-group>
      <ribbon-group class="label" label="标注" launcher>
        <div class="stack pad">
          <div class="row">
            <ribbon-item class="pad" icon="labelPause">暂停</ribbon-item>
            <ribbon-item icon="labelLock">锁定</ribbon-item>
          </div>
          <ribbon-item class="pad" icon="labelX">查看未放置的标注</ribbon-item>
          <ribbon-item class="pad" icon="labelMore" menu>更多</ribbon-item>
        </div>
        <ribbon-button class="w90" icon="convert" menu>转换</ribbon-button>
      </ribbon-group>
      <ribbon-group class="offline" label="离线" launcher>
        <ribbon-button class="w90" icon="download" disabled menu>下载地图</ribbon-button>
        <div class="stack pad">
          <ribbon-item icon="sync" disabled>同步</ribbon-item>
          <ribbon-item icon="sync" disabled>移除</ribbon-item>
        </div>
      </ribbon-group>
      <ribbon-group class="geo" label="配准">
        <ribbon-button class="w90" icon="georef" disabled>地理配准</ribbon-button>
      </ribbon-group>
      <div class="end"><button type="button"><ui-icon name="chevronUp" size="16"></ui-icon></button></div>
    `;
  }
}
customElements.define('app-ribbon', AppRibbon);

// ---------- contents pane ----------

class PaneHeader extends UiElement {
  static render() {
    return `
      <style>
        ${BUTTON_RESET}
        :host { display: flex; align-items: center; height: 36px; padding: 0 3px 0 8px; color: #555; }
        h2 { margin: 0; flex: 1; font: 400 20px "Noto Sans CJK SC", sans-serif; }
        button { width: 25px; height: 25px; display: grid; place-items: center; }
      </style>
      <h2><slot></slot></h2>
      <button type="button"><ui-icon name="chevron" size="13"></ui-icon></button>
      <button type="button"><ui-icon name="pin" size="14"></ui-icon></button>
      <button type="button"><ui-icon name="close" size="15"></ui-icon></button>
    `;
  }
}
customElements.define('pane-header', PaneHeader);

class SearchBox extends UiElement {
  static render(el) {
    return `
      <style>
        :host {
          display: flex;
          align-items: center;
          flex: 1;
          gap: 14px;
          height: 31px;
          min-width: 0;
          box-sizing: border-box;
          padding: 0 6px;
          background: #fff;
          border: 2px solid #b4b4b4;
          color: #666;
        }
        input { flex: 1; min-width: 0; border: 0; outline: 0; padding: 0; background: none; font: italic 15px "Noto Sans Mono CJK SC", "Noto Sans CJK SC", sans-serif; }
        input::placeholder { color: #888; opacity: 1; }
      </style>
      <input type="text" placeholder="${el.getAttribute('hint')}" aria-label="${el.getAttribute('hint')}">
      <ui-icon name="search" size="18"></ui-icon>
      <ui-icon name="chevron" size="13"></ui-icon>
    `;
  }
}
customElements.define('search-box', SearchBox);

class ContentsPane extends UiElement {
  static render() {
    const modes = ['byOrder', 'bySource', 'bySelection', 'byEditing', 'bySnapping', 'byLabeling'];
    const layers = [
      ['图层组', false],
      ['天地图-地形注记（球面墨卡托投影）', true],
      ['天地图-地形地图（球面墨卡托投影）', true],
    ];
    return `
      <style>
        ${BUTTON_RESET}
        :host { display: flex; flex-direction: column; background: #f7f7f7; color: #5a5a5a; }
        .search { display: flex; align-items: center; gap: 10px; padding: 2px 4px 0 5px; }
        .modes { display: flex; align-self: flex-start; margin: 9px 0 0 19px; border-bottom: 2px solid #dcdcdc; }
        .modes button { width: 43px; height: 44px; display: grid; place-items: center; border-bottom: 4px solid transparent; margin-bottom: -2px; box-sizing: border-box; }
        .modes .on { border-color: #1680c8; }
        h3 { margin: 12px 0 7px 20px; font: 500 18px/28px "Noto Sans CJK SC", sans-serif; color: #555; }
        .root, label { display: flex; align-items: center; height: 32px; box-sizing: border-box; }
        .root { gap: 6px; padding-left: 2px; }
        .root ui-icon:first-child { margin-right: 2px; }
        label { margin: 0 0 0 30px; padding: 0 7px 0 3px; border: 2px solid transparent; gap: 7px; color: #777; }
        label span { flex: 1; white-space: nowrap; }
        label.on { background: #c5dbee; border-color: #5baddb; }
        input { appearance: none; width: 17px; height: 17px; margin: 0; background: #777; border: 4px solid #e2e2e2; border-radius: 2px; }
      </style>
      <pane-header>内容</pane-header>
      <div class="search"><ui-icon name="filter" size="18"></ui-icon><search-box hint="搜索"></search-box></div>
      <div class="modes">${modes.map((m) => `<button type="button" class="${m === 'byEditing' ? 'on' : ''}"><ui-icon name="${m}" size="28"></ui-icon></button>`).join('')}</div>
      <h3>编辑</h3>
      <div class="root"><ui-icon name="expander" size="8"></ui-icon><ui-icon name="mapSheet" size="22"></ui-icon><span>2010年碳排放</span></div>
      ${layers.map(([name, error], i) => `<label class="${i === 1 ? 'on' : ''}"><input type="checkbox"><span>${name}</span>${error ? '<ui-icon name="error"></ui-icon>' : ''}</label>`).join('')}
    `;
  }
}
customElements.define('contents-pane', ContentsPane);

// ---------- map ----------
// Everything on the map canvas is in one coordinate space, origin at VIEW.

const VIEW = { x: 708, y: 284, width: 1068, height: 1016 };

const WIDE_ROADS = [
  'M763 284V640L765 820', 'M992 284V692L996 820 999 1000 998 1300',
  'M708 692H1000L1222 689 1448 680 1776 669',
  'M708 848C760 840 750 828 830 826L995 820 1240 811C1300 820 1330 808 1480 800L1576 797C1600 797 1600 808 1640 807L1776 803',
  'M708 995L900 1000H1000L1150 995C1250 988 1280 965 1350 954L1500 940 1776 925',
  'M1370 1297H1530', 'M765 780C775 800 790 822 830 826',
];

const ROADS = [
  'M1562 284L1566 493 1570 613 1576 780 1581 937 1585 1026 1601 1066 1611 1137 1615 1290',
  'M1451 284V350M1474 300L1479 500 1485 613 1490 860 1497 937 1500 1016',
  'M1414 287L1424 597 1425 793', 'M1404 287L1412 420 1416 600',
  'M1674 287L1681 447 1685 547 1690 727', 'M1755 284L1757 490',
  'M1385 399L1562 399 1776 397', 'M1566 442L1681 439 1776 440', 'M1359 557L1481 551 1570 548 1776 548',
  'M1776 729L1664 732C1650 735 1620 780 1596 790', 'M1430 635H1570M1566 493L1776 486M1570 503H1680',
  'M851 284V700L852 900 857 1102 860 1190 864 1300', 'M708 1102H998L1170 1100', 'M708 1197L860 1190 1000 1183 1160 1177 1210 1170',
  'M1168 1102V1190L1174 1300', 'M1134 1000L1137 1100', 'M1118 700L1125 820 1130 860 1134 1000',
  'M1136 1297L1200 1293 1290 1286 1776 1276', 'M708 1058L790 1050 850 1052',
  'M1240 1050L1322 1048C1360 1040 1370 1026 1411 1020L1540 1017C1570 1018 1580 1030 1590 1037',
  'M1313 973L1318 1148C1300 1165 1304 1170 1304 1200L1308 1250 1315 1273V1300', 'M1322 1040L1324 1148 1340 1176V1248L1335 1280V1300',
  'M1696 805L1700 930C1710 960 1740 980 1742 1000L1748 1087', 'M1611 1090L1776 1088M1615 1141L1776 1138',
  'M1240 700V690M1225 690L1228 740 1226 790', 'M1350 873L1420 863 1576 865 1776 858',
  'M1280 814C1262 840 1262 850 1262 880L1264 950 1270 970', 'M1336 830L1348 870 1350 980',
  'M1359 416L1385 399 1376 340M1222 420L1366 416', 'M708 1275L790 1270M925 1000L905 1100M970 1000V1060H1000',
];

const LANES = [
  'M930 640V800L920 1000', 'M708 740H800L850 745 920 748H1100L1240 742', 'M708 790H770M800 640V690M820 760H850V800H817',
  'M885 692V740M958 692V740M1030 630V690M1050 740L1048 820', 'M708 870H780L850 858H780V880H850', 'M708 890H760V840',
  'M708 880L840 878M925 860L1000 850 1120 838', 'M925 860L920 920 895 1000', 'M850 925L880 935 890 900', 'M1064 840V920M1095 840V882H1064',
  'M1004 938H1080M1026 880V938M1140 890V918', 'M708 948L765 946M765 890V1000', 'M726 990V1100L730 1300', 'M790 1000V1160L798 1190', 'M746 1005V1025H765V1050',
  'M957 1000V1045H998M968 1045L967 1100', 'M1046 1000V1100M1070 1000V1060M1000 1075H1060', 'M1100 1069H1130M1140 1052H1240',
  'M950 1102V1190M950 1132H998M910 1190V1300', 'M1018 1160H1060V1210M1032 1185L1036 1230M985 1190V1230',
  'M1096 1102V1180M1170 1146H1240V1100', 'M1204 1000V1100M1244 1015V1170M1176 1025H1240', 'M730 1265H780L788 1278H860',
  'M1282 287V330M1282 294H1344V320L1404 315M1250 330H1325V400M1250 330V410', 'M1414 302L1474 306M1530 300L1545 310H1562M1490 284V303H1530',
  'M1562 299H1674M1562 348H1674L1776 343M1562 360H1676M1414 349H1452L1562 338M1704 343V383H1680M1714 300V343',
  'M1376 475H1424M1398 430V475M1366 510L1385 500 1560 494M1470 525H1560M1492 537H1570M1502 551V573M1493 573H1517M1517 551L1513 635',
  'M1375 597H1400L1410 588H1424M1424 593H1480M1453 551V658M1497 573V610H1480', 'M1405 649L1430 658H1480M1600 551L1606 558H1680M1595 502L1605 540V558',
  'M1572 573H1690M1572 597H1690M1570 650L1680 648M1776 608V490M1748 551V608H1690M1740 608L1738 655M1607 650V670',
  'M1240 700V770H1272M1278 692V780M1325 692L1330 860M1222 715L1225 760 1260 780M1330 766H1345V780M1545 690L1548 760 1543 780H1575',
  'M1486 715L1545 712 1600 705M1660 700V732M1692 690V732M1718 670V732M1588 690V703', 'M1330 782H1440L1575 792M1425 765L1500 775',
  'M1463 820V860L1480 920M1425 830L1463 820M1503 830V864M1552 800V885H1580M1536 865V925H1570V895H1555V925', 'M1609 860V925M1660 830V860M1700 832H1660M1755 830V858M1740 865L1745 900',
  'M1411 945V1020M1435 940V1020M1470 970V1017M1378 975L1470 970 1500 978C1540 980 1560 990 1572 996M1730 975H1776',
  'M1260 980V1050M1240 1023H1262M1270 1052V1142M1296 1100V1145M1240 1097H1320M1240 1145H1318M1245 1050V1168',
  'M1350 1142V1165L1356 1180V1200L1345 1225 1340 1300M1306 1216H1345', 'M1660 1030H1700M1600 1065L1644 1050 1660 1085 1665 1120V1180',
  'M1611 1182H1700L1712 1210 1690 1230M1637 1182L1640 1230M1675 1190V1250C1660 1270 1650 1275 1640 1280', 'M1285 1290H1290M1668 1275V1290L1776 1295',
  'M778 640V700M785 664H851M813 640V664M860 655H900V640M920 630V660L965 662H1030M965 662V740M948 640L975 700', 'M1090 640L1110 690M1170 692V740M1180 770H1240M1180 692V790M1020 745L1015 784M1050 784H1180L1240 790', 'M708 640H765M708 560H717M708 515H717M810 284V292M1060 284V292M1098 292V344H1074M1108 405L1120 440H1074M1096 440V640',
];

const BLACK = '#66575f';
const NAVY = '#5c6294';
const PARK = '#72766a';
const SOFT = '#8f8f7e';
const ESTATE = '#8888a2';

// x, vertical centre, text, colour
const LABELS = [
  [1682, 302, '北京市工业技术'], [1682, 318, '开发中心'], [1448, 327, '东城区人民政府'], [1421, 362, '国家文物局'],
  [1203, 376, '北海公园', PARK], [1308, 377, '求是杂志社'], [1421, 397, '中国民航局'], [1612, 395, '国务院发展研究中心'],
  [1762, 397, '朝'], [1764, 417, '外'], [1436, 425, '民盟中央'], [1436, 467, '中国船舶检验局'], [1761, 458, '司法'],
  [1450, 507, '北京市宗教事务局'], [1624, 524, '红十字会总会'], [1306, 538, '故宫博物院'], [1771, 543, '国'],
  [1373, 616, '中国人民外交学会'], [1282, 656, '天安门', '#3d4a3d'], [1503, 672, '商务部'], [1447, 689, '生态环境部'],
  [1676, 655, '交通运输部'], [1594, 686, '中国伟业军官服务站'], [1757, 686, '海关'], [1409, 718, '公安部'],
  [1469, 756, '北京市卫医'], [1469, 772, '康服务中心'], [1702, 756, '北京站', '#5a62b8'],
  [1075, 359, '市第三十九中学', NAVY], [1090, 405, '西城区西什库小学', NAVY], [1083, 434, '国家机关事务管理局'],
  [1069, 486, '号楼', PARK], [1066, 539, '市管理'], [1062, 613, '二里', PARK], [814, 296, '中国印刷'],
  [821, 675, '中国人民银行'], [737, 692, '复兴门桥', SOFT], [738, 710, '国家广播电视总局'], [869, 725, '北京市供电局'],
  [1105, 684, '中央宣传部'], [1069, 708, '中央组织部'], [997, 736, '中国政研会'], [808, 774, '中央音乐学院', NAVY],
  [900, 816, '新华社'], [1077, 795, '北京市教育委员会'], [1077, 812, '信访室'], [739, 829, '西便门桥', SOFT],
  [777, 847, '翠芳园', PARK], [1117, 837, '椿树街道敬老广场', PARK], [848, 878, '北京市地方金融'], [848, 894, '监督管理局'],
  [1023, 889, '北京粤财'], [1023, 905, 'jw万豪酒店'], [851, 953, '宣武医院'], [1021, 967, '新闻出版署'],
  [1118, 977, '北京第一实验小学', NAVY], [768, 982, '国家信息中心软件'], [768, 998, '评测中心'], [896, 978, '北京市宣联'], [896, 994, '存车管理处'],
  [800, 1070, '水利部'], [1176, 1016, '蜡烛园', PARK], [1022, 1066, '中信禧园', ESTATE], [716, 1110, '北京市卫生局'],
  [854, 1123, '回民医院'], [1026, 1145, '健宫医院'], [1189, 1137, '富力商业中心', PARK], [733, 1175, '北京市实验职业学校', NAVY],
  [924, 1164, '万寿公园', PARK], [718, 1229, '紫禁城酒店'], [867, 1232, '右安门商务大厦', PARK], [1027, 1244, '北京市市政处'], [1027, 1259, '第一管理所'],
  [1160, 1274, '陶然休闲文化园', PARK], [867, 1291, '北京宣武社区学院', NAVY], [718, 1304, '北京教育学院'],
  [1382, 800, '国务院参事室'], [1309, 829, '前门大街景区'], [1519, 826, '双鱼座', PARK], [1598, 838, '国瑞大厦', PARK],
  [1387, 906, '三里河公园', PARK], [1612, 902, '普仁医院'], [1712, 892, '中国合格评'], [1712, 908, '国家认可中'],
  [1360, 933, '全国新闻工作者协会'], [1603, 928, '新景商务楼', PARK], [1376, 988, '北京金霖酒店'], [1588, 982, '雅园', PARK],
  [1774, 982, '北'], [1750, 1017, '北京', NAVY], [1750, 1033, '中学', NAVY], [1319, 1072, '中国版权保护中心'],
  [1585, 1077, '国家体育总局'], [1585, 1093, '体育信息中心'], [1746, 1098, '国家体'], [1595, 1142, '北京市第一一五中学', NAVY],
  [1723, 1168, '龙潭西湖', PARK], [1371, 1196, '复康南里', ESTATE], [1331, 1241, '永定门公园', PARK],
  [1629, 1234, '国家体育总局训练局'], [1629, 1250, '西院'], [1421, 1286, '二十四节气公园', PARK], [1598, 1291, '玉蜓公园', PARK], [1302, 1306, '永定门桥'],
];

// x, top, text
const DISTRICTS = [
  [1710, 453, '朝阳门'], [1406, 534, '东华门'], [1672, 566, '建国门'], [1084, 733, '西长安街'], [1218, 931, '大栅栏'],
  [850, 1030, '牛街'], [801, 1134, '白纸坊'], [1081, 1149, '陶然亭'], [1723, 822, '东花市'], [1355, 947, '天坛'], [1596, 1033, '体育馆路'],
];

const POINTS = {
  red: [[1412, 361], [1385, 375], [1497, 395], [1604, 392], [1427, 423], [1615, 522], [1363, 613], [1524, 686], [1437, 687], [1667, 652], [1747, 683], [1399, 716], [1075, 432], [803, 292], [813, 673], [729, 707], [1096, 682], [1060, 706], [1031, 718], [949, 814], [839, 883], [1011, 964], [791, 1068], [1374, 799], [1491, 932], [1737, 1096]],
  dot: [[1671, 310], [1552, 327], [1428, 466], [1504, 521], [1297, 538], [1655, 699], [1545, 762], [960, 724], [1067, 802], [759, 988], [973, 985], [1018, 1252], [1300, 828], [1702, 899], [1309, 1071], [1675, 1083], [1620, 1241]],
  tree: [[1193, 375], [768, 846], [1108, 835], [1167, 1015], [915, 1163], [1151, 1273], [1378, 905], [1579, 981], [1713, 1168], [1321, 1240], [1411, 1285], [1588, 1290]],
  book: [[1082, 404], [799, 772], [1108, 976], [724, 1173], [857, 1290], [1740, 1024], [1586, 1141]],
  clinic: [[841, 952], [845, 1122], [1016, 1144], [1601, 901]],
  tower: [[1012, 896], [709, 1229], [1179, 1135], [857, 1231], [1509, 825], [1589, 837], [1593, 927], [1365, 987], [1763, 980]],
};

class MapCanvas extends UiElement {
  static render() {
    const paths = (list) => list.map((d) => `<path d="${d}"/>`).join('');
    const uses = Object.entries(POINTS).map(([kind, list]) => list.map(([x, y]) => `<use href="#${kind}" x="${x}" y="${y}"/>`).join('')).join('');
    return `
      <style>
        :host { display: block; position: absolute; inset: 0; overflow: hidden; background: #e3f7db; }
        svg { display: block; }
        text { font: 500 13px "Noto Sans CJK SC", sans-serif; paint-order: stroke; stroke: #eefae8; stroke-width: 2px; }
        .district text { fill: #fff; stroke: none; font-weight: 700; }
        .scale text { font: 400 17px "Noto Sans", sans-serif; fill: #333; stroke: none; }
      </style>
      <svg width="${VIEW.width}" height="${VIEW.height}" viewBox="${VIEW.x} ${VIEW.y} ${VIEW.width} ${VIEW.height}">
        <defs>
          <g id="red"><path d="M-2-2h5v5h-5z" fill="#f0504e"/></g>
          <g id="dot"><circle r="2" fill="#5a4a52"/></g>
          <g id="tree"><path d="M0-6l4 10H1v3h-2V4h-3z" fill="#2f7d2a"/></g>
          <g id="book"><path d="M-5-4l5 2 5-2v7l-5 2-5-2z" fill="#555"/></g>
          <g id="clinic"><path d="M0-6l6 6-6 6-6-6z" fill="#fff" stroke="#ea5560" stroke-width="2.500"/><path d="M-3 0h6M0-3v6" stroke="#ea5560" stroke-width="2"/></g>
          <g id="tower"><path d="M-5-5h6v3h4v8H-5z" fill="#655f63"/><path d="M-3-2h2M-3 1h2M1 2h2" stroke="#e3f7db" stroke-width="1.500"/></g>
          <filter id="soft" x="-.5" y="-.5" width="2" height="2"><feGaussianBlur stdDeviation="8"/></filter>
          <filter id="haze" x="-.5" y="-.5" width="2" height="2"><feGaussianBlur stdDeviation="3"/></filter>
        </defs>
        <g filter="url(#soft)">
          <ellipse cx="1290" cy="372" rx="36" ry="18" fill="#eafbe2"/>
          <ellipse cx="1128" cy="1185" rx="34" ry="40" fill="#eafce0"/>
          <ellipse cx="1182" cy="1236" rx="22" ry="30" fill="#d9ecd2"/>
        </g>
        <path d="M1264 403c10-10 20-4 30-10 6-10 16-2 28-4l-1 12c-15 0-36 8-57 2z" fill="#5f8460" filter="url(#haze)"/>
        <path d="M1118 1228c20 2 32-10 42-28 4 4-2 16-8 20-8 8-20 12-34 8z" fill="#8daf86" filter="url(#haze)"/>
        <g fill="none" stroke="#f1eeb4" stroke-width="2">${paths(LANES)}</g>
        <g fill="none" stroke="#f2eca8" stroke-width="3">${paths(ROADS)}</g>
        <g fill="none" stroke="#f4eb9d" stroke-width="6">${paths(WIDE_ROADS)}</g>
        ${uses}
        <circle cx="1693" cy="755" r="6" fill="#4f8ff0"/>
        <path d="M1689 758v-6h8v6M1689 755h8" fill="none" stroke="#dce8ff" stroke-width="1.500"/>
        <path d="M1290 676v-3l4-4 2-4h13l2 4 4 4v3h-5l-3-3h-9l-3 3z" fill="#c5202a"/>
        ${LABELS.map(([x, y, t, c]) => `<text x="${x}" y="${y + 5}" fill="${c || BLACK}">${t}</text>`).join('')}
        <g class="district">${DISTRICTS.map(([x, y, t]) => `<rect x="${x}" y="${y}" width="${t.length * 13 + 9}" height="17" rx="1" fill="#53b1bb"/><text x="${x + 5}" y="${y + 13}">${t}</text>`).join('')}</g>
        <path d="M1222 687L1212 416H1366L1376 683z" fill="none" stroke="#fff" stroke-width="3"/>
        <path d="M1222 687L1212 416H1366L1376 683z" fill="none" stroke="#4646c8" stroke-width="2.500" stroke-dasharray="6 5"/>
        <g class="scale"><rect x="1188" y="707" width="69" height="26" fill="#fff"/><text x="1196" y="726">1.3 km</text></g>
      </svg>
    `;
  }
}
customElements.define('map-canvas', MapCanvas);

class MeasurePanel extends UiElement {
  static render() {
    return `
      <style>
        ${BUTTON_RESET}
        :host {
          display: block;
          width: 356px;
          box-sizing: border-box;
          padding: 0 7px 6px 7px;
          background: #f7f7f7;
          border: 1px solid #d0d0d0;
          box-shadow: 0 1px 4px rgba(0, 0, 0, 0.2);
          font-family: "Noto Sans CJK SC", "Noto Sans", sans-serif;
          color: #777;
        }
        header, .tools, .result { display: flex; align-items: center; border-bottom: 2px solid #d6d6d6; }
        header { height: 42px; padding: 0 10px 0 25px; }
        h2 { flex: 1; margin: 0; font-size: 20px; font-weight: 400; }
        .tools { height: 38px; gap: 5px; padding-right: 5px; color: #555; }
        .tools button { display: flex; align-items: center; gap: 10px; flex: 1; padding-left: 7px; }
        .pick { position: relative; display: block; width: 120px; color: #666; }
        .pick ui-icon { position: absolute; right: 4px; top: 9px; pointer-events: none; }
        select { appearance: none; width: 100%; height: 29px; box-sizing: border-box; background: #fff; border: 2px solid #b4b4b4; border-radius: 0; font: inherit; font-size: 14px; color: #888; padding: 0 4px; }
        .result { height: 38px; gap: 14px; font-size: 17px; padding-right: 7px; }
        .result h3 { flex: 1; margin: 0; font-size: 17px; font-weight: 400; }
        h4 { margin: 0; font-size: 16px; font-weight: 400; line-height: 34px; }
        h4 + table + h4 { line-height: 28px; }
        table { width: 100%; border-collapse: collapse; table-layout: fixed; }
        th, td { padding: 0 4px; font-size: 15px; line-height: 22px; font-weight: 400; white-space: nowrap; }
        th { background: #fff; border: 2px solid #9a9a9a; color: #8a8a8a; }
        td { text-align: right; color: #333; vertical-align: bottom; }
        .tint { background: #efefef; }
        .mid { background: #dedede; }
        .sum { background: #cbcbcb; border: 2px solid #b0b0b0; }
        .area td { border-bottom: 2px solid #cfcfcf; }
      </style>
      <header><h2>测量面积</h2><button type="button"><ui-icon name="close" size="13"></ui-icon></button></header>
      <div class="tools">
        <button type="button"><ui-icon name="measureSmall" size="24"></ui-icon><ui-icon name="chevron" size="10"></ui-icon></button>
        <span class="pick"><select aria-label="测量模式"><option>平面</option></select><ui-icon name="caret" size="12"></ui-icon></span>
        <span class="pick"><select aria-label="单位"><option>公制</option></select><ui-icon name="caret" size="12"></ui-icon></span>
      </div>
      <div class="result"><h3>结果</h3><button type="button"><ui-icon name="copySmall" size="18"></ui-icon></button><button type="button"><ui-icon name="eraser" size="18"></ui-icon></button></div>
      <h4>面积</h4>
      <table class="area">
        <colgroup><col style="width: 78px"><col></colgroup>
        <tr><th>面积(km²)</th><th>总和(km²)</th></tr>
        <tr><td>2.95</td><td class="sum">2.95</td></tr>
      </table>
      <h4>距离</h4>
      <table>
        <colgroup><col style="width: 66px"><col style="width: 67px"><col></colgroup>
        <tr><th>线段(m)</th><th>周长(m)</th><th>总和(m)</th></tr>
        <tr><td>1,297.82</td><td class="mid" rowspan="3">4,844.03</td><td class="sum" rowspan="3">4,844.03</td></tr>
        <tr><td class="tint">2,247.61</td></tr>
        <tr><td>1,298.61</td></tr>
      </table>
    `;
  }
}
customElements.define('measure-panel', MeasurePanel);

class MapStatus extends UiElement {
  static render() {
    return `
      <style>
        ${BUTTON_RESET}
        :host { display: flex; align-items: center; justify-content: space-between; height: 32px; background: #f9f9f9; font-size: 16px; color: #555; }
        div { display: flex; align-items: center; gap: 8px; }
        .left { padding-left: 8px; }
        .right { padding-right: 6px; gap: 9px; }
        .pick { position: relative; width: 132px; margin-right: 6px; }
        .pick ui-icon { position: absolute; right: 4px; pointer-events: none; }
        select { appearance: none; width: 100%; height: 29px; box-sizing: border-box; font: inherit; color: inherit; background: #fff; border: 2px solid #a5a5a5; border-width: 0 2px; border-radius: 0; padding: 0 5px; }
        i { width: 2px; height: 22px; background: #cfcfcf; }
        .count { color: #8f8f8f; }
        button { display: flex; }
      </style>
      <div class="left">
        <div class="pick"><select aria-label="比例尺"><option>1:42,653</option></select><ui-icon name="caret" size="12"></ui-icon></div>
        <button type="button"><ui-icon name="snapAdd" size="22"></ui-icon></button>
        <button type="button"><ui-icon name="grid" size="22"></ui-icon></button>
        <button type="button"><ui-icon name="dynamic" size="22"></ui-icon></button>
        <button type="button"><ui-icon name="crosshair" size="22"></ui-icon></button>
        <button type="button"><ui-icon name="compare" size="22"></ui-icon></button>
        <i></i>
      </div>
      <div><span>116.3852705° E 39.9060710° N</span><ui-icon name="chevron" size="14"></ui-icon></div>
      <div class="right">
        <i></i><ui-icon name="selCount" size="22"></ui-icon><span class="count">所选要素: 0</span>
        <i></i><button type="button"><ui-icon name="pause"></ui-icon></button>
        <i></i><button type="button"><ui-icon name="refresh" size="22"></ui-icon></button>
      </div>
    `;
  }
}
customElements.define('map-status', MapStatus);

class MapPane extends UiElement {
  static render() {
    return `
      <style>
        ${BUTTON_RESET}
        :host { display: flex; flex-direction: column; }
        .tabs { display: flex; align-items: center; justify-content: space-between; padding-right: 6px; border-bottom: 3px solid #4f9ccd; color: #777; }
        .tab { display: flex; align-items: center; gap: 7px; height: 30px; padding: 0 8px; background: #0479cc; color: #e4f2fc; border-radius: 4px 4px 0 0; }
        .tab button { display: flex; margin-left: 6px; }
        .stage { flex: 1; position: relative; overflow: hidden; }
        measure-panel { position: absolute; left: 9px; top: 8px; }
        .fold { position: absolute; left: 3px; top: 2px; width: 24px; height: 24px; border-radius: 50%; background: #f7f7f7; box-shadow: 0 0 3px rgba(0, 0, 0, 0.3); display: grid; place-items: center; }
        .notes { position: absolute; right: 8px; bottom: 8px; }
      </style>
      <div class="tabs">
        <span class="tab"><ui-icon name="mapSheet" size="20"></ui-icon>2010年碳排放<button type="button"><ui-icon name="close" size="14"></ui-icon></button></span>
        <ui-icon name="chevron" size="13"></ui-icon>
      </div>
      <div class="stage">
        <map-canvas></map-canvas>
        <measure-panel></measure-panel>
        <button type="button" class="fold"><ui-icon name="chevronUp" size="14"></ui-icon></button>
        <button type="button" class="notes"><ui-icon name="notes" size="30"></ui-icon></button>
      </div>
      <map-status></map-status>
    `;
  }
}
customElements.define('map-pane', MapPane);

// ---------- catalog pane ----------

const CATALOG = [
  ['mapSheet', 'car'], ['mapSheet', '表'], ['mapSheet', '2015至2018各省份车辆拥有数量'], ['mapSheet', '2015-2018各省份车辆拥有数量'],
  ['webLayer', 'GDP贵州'], ['mapSheet', '2014到2018年各国GDP变化'], ['mapSheet', '各国2014-2018年GDP变化'],
  ['mapSheet', '一带一路GDP变化'], ['mapSheet', '一带一路GDP变化'], ['mapSheet', '一带一路GDP各国变化'], ['mapSheet', '一带一路'],
  ['mapSheet', '各城市温度变化'], ['cloudDoc', '绿动蓝天“碳”路未来——“双碳”背景下的土地利用'], ['mapSheet', '2010年碳排放'],
  ['mapSheet', '2020年碳排放图'], ['mapSheet', '2000碳排放时空演变图'], ['cloudDoc', '“湘”伴留守儿童　共守心灯四方'],
  ['cloudDoc', '绿水青山映沙坝，古道花繁蜜满家'], ['mapSheet', '沙坝村2分区'], ['mapSheet', '1粮食产量'], ['webLayer', 'fghhjfdt'],
  ['mapSheet', '829'], ['cloudDoc', '全国省会降水'], ['cloudDoc', '主要城市公园满意度调查2'],
];

class CatalogPane extends UiElement {
  static render() {
    const clouds = ['cloudUser', 'cloudStar', 'cloudGroup', 'cloudOrg', 'cloudSolid'];
    return `
      <style>
        ${BUTTON_RESET}
        :host { display: flex; flex-direction: column; background: #f7f7f7; color: #5a5a5a; }
        pane-header { height: 34px; }
        .tabs { display: flex; align-items: flex-start; gap: 16px; padding: 0 10px 0 9px; height: 34px; font-size: 16px; color: #444; }
        .tabs button { line-height: 24px; border-bottom: 3px solid transparent; }
        .tabs .on { border-color: #1680c8; }
        .tabs .menu { margin: 8px 0 0 auto; line-height: 0; }
        .clouds { display: flex; height: 44px; padding-left: 3px; }
        .clouds button { width: 45px; display: grid; place-items: center; }
        .clouds button:last-child { background: #f4f4f4; }
        .portal { display: flex; align-items: center; justify-content: space-between; padding: 0 8px 0 6px; height: 38px; font-size: 16px; font-weight: 500; color: #444; }
        .switch { display: flex; background: #fff; border: 2px solid #b4b4b4; font-size: 14px; font-weight: 400; color: #777; }
        .switch button { width: 40px; line-height: 26px; }
        .switch .on { background: #bfe3f8; }
        .tools { display: flex; align-items: center; padding: 4px 7px 0 5px; }
        .tools .box { width: 30px; height: 31px; display: grid; place-items: center; border: 2px solid #c9c9c9; border-right-width: 0; box-sizing: border-box; background: #fff; }
        .tools .go { display: flex; margin-right: 6px; }
        .browse { flex: 1; display: flex; min-height: 0; padding: 6px 7px 0 6px; }
        ul { flex: 1; min-width: 0; list-style: none; margin: 0; padding: 0; display: flex; flex-direction: column; overflow: hidden; }
        .above { flex: none; display: block; height: 10px; padding-left: 13px; }
        .above::before { content: ''; display: block; width: 23px; border-bottom: 2px solid #a5a5a5; }
        .item { flex: 1; display: flex; align-items: center; gap: 9px; padding-left: 12px; border: 2px solid transparent; box-sizing: border-box; min-height: 0; white-space: nowrap; overflow: hidden; color: #6c6c6c; }
        .on.item { background: #c5dbee; border-color: #6fb5de; }
        .bar { width: 22px; background: #ececec; display: grid; grid-template-rows: 24px 1fr 24px; justify-items: center; align-items: center; color: #777; }
        .bar b { width: 12px; height: 24%; margin-top: 30px; background: #b6b6b6; border-radius: 6px; }
        a { align-self: center; line-height: 20px; padding: 19px 0 6px; color: #62a062; text-decoration: none; }
      </style>
      <pane-header>目录</pane-header>
      <div class="tabs">
        <button type="button">工程</button><button type="button" class="on">门户</button><button type="button">收藏夹</button>
        <button type="button" class="menu"><ui-icon name="menu" size="18"></ui-icon></button>
      </div>
      <div class="clouds">${clouds.map((c) => `<button type="button"><ui-icon name="${c}" size="32"></ui-icon></button>`).join('')}</div>
      <div class="portal">
        <span>GeoScene Online</span>
        <span class="switch"><button type="button" class="on">内容</button><button type="button">群组</button></span>
      </div>
      <div class="tools">
        <button type="button" class="go"><ui-icon name="circleBack" size="25"></ui-icon></button>
        <button type="button" class="box"><ui-icon name="home" size="18"></ui-icon></button>
        <button type="button" class="box"><ui-icon name="sort" size="20"></ui-icon></button>
        <button type="button" class="box"><ui-icon name="filterLine" size="20"></ui-icon></button>
        <search-box hint="搜索 GeoScene Online"></search-box>
      </div>
      <div class="browse">
        <ul>
          <li class="above"></li>
          ${CATALOG.map(([icon, name], i) => `<li class="item ${i === 13 ? 'on' : ''}"><ui-icon name="${icon}" size="23"></ui-icon><span>${name}</span></li>`).join('')}
        </ul>
        <div class="bar"><ui-icon name="chevronUp" size="12"></ui-icon><b></b><ui-icon name="chevron" size="12"></ui-icon></div>
      </div>
      <a href="#more">查找更多项目...</a>
    `;
  }
}
customElements.define('catalog-pane', CatalogPane);

// ---------- shell ----------

class AppWindow extends UiElement {
  static render() {
    return `
      <style>
        :host {
          display: flex;
          flex-direction: column;
          background: #f7f7f7;
          box-shadow: 0 0 3px rgba(0, 0, 0, 0.6), 0 4px 26px rgba(0, 0, 0, 0.5);
        }
        .work {
          flex: 1;
          min-height: 0;
          display: grid;
          grid-template-columns: minmax(0, 424fr) minmax(0, 1068fr) minmax(0, 424fr);
          gap: 10px;
          padding: 8px 10px 11px;
          background: #e8e8ea;
        }
        contents-pane, catalog-pane { margin-top: 2px; }
      </style>
      <title-bar></title-bar>
      <ribbon-tabs></ribbon-tabs>
      <app-ribbon></app-ribbon>
      <div class="work">
        <contents-pane></contents-pane>
        <map-pane></map-pane>
        <catalog-pane></catalog-pane>
      </div>
    `;
  }
}
customElements.define('app-window', AppWindow);

class DesktopShell extends UiElement {
  static render() {
    return `
      <style>
        :host { display: flex; flex-direction: column; height: 100vh; position: relative; overflow: hidden; }
        main { flex: 1; position: relative; min-height: 0; }
        nav { width: 160px; padding: 54px 0 0 40px; }
        app-window { position: absolute; inset: 38px 340px 45px 265px; }
        desktop-seal { position: absolute; right: 102px; bottom: 103px; }
      </style>
      <desktop-wallpaper></desktop-wallpaper>
      <main>
        <nav>
          <desktop-shortcut icon="computer">计算机</desktop-shortcut>
          <desktop-shortcut icon="homeFolder">我的目录</desktop-shortcut>
          <desktop-shortcut icon="trash">回收站</desktop-shortcut>
          <desktop-shortcut icon="earth">GeoScenePro</desktop-shortcut>
        </nav>
        <desktop-seal></desktop-seal>
        <app-window></app-window>
      </main>
      <task-bar></task-bar>
    `;
  }
}
customElements.define('desktop-shell', DesktopShell);
</script>
</body>
</html>
